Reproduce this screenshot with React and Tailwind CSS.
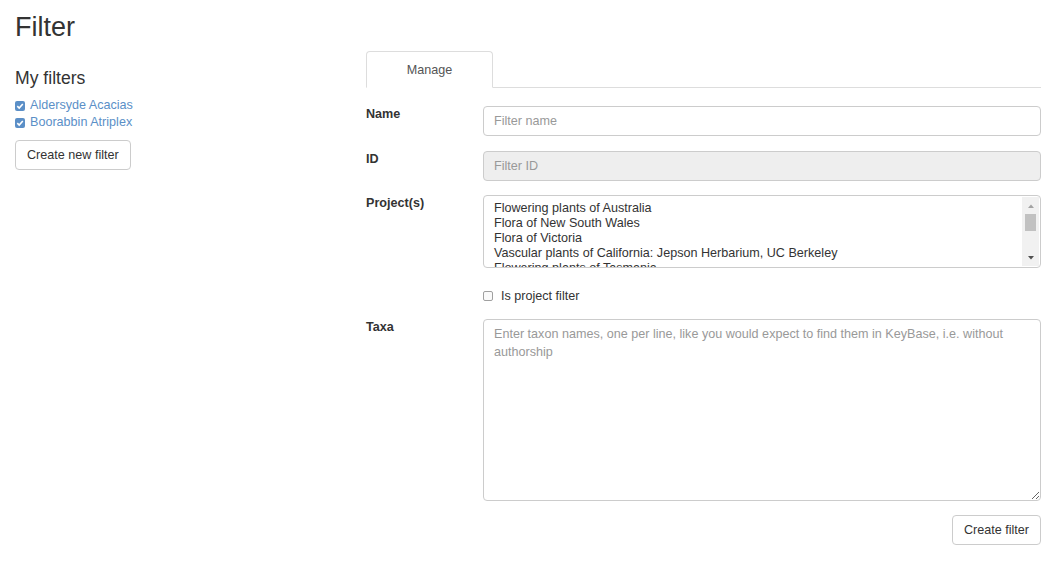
import React from "react";

const projects = [
  "Flowering plants of Australia",
  "Flora of New South Wales",
  "Flora of Victoria",
  "Vascular plants of California: Jepson Herbarium, UC Berkeley",
  "Flowering plants of Tasmania",
];

const myFilters = ["Aldersyde Acacias", "Boorabbin Atriplex"];

function CheckedBox() {
  return (
    <span className="inline-flex items-center justify-center w-[10px] h-[10px] rounded-[2px] bg-[#5b8fc7] mr-[5px]">
      <svg width="8" height="8" viewBox="0 0 8 8">
        <path d="M1.3 4.2 L3.2 6 L6.8 2" stroke="#fff" strokeWidth="1.6" fill="none" />
      </svg>
    </span>
  );
}

function FormRow({ label, children, className = "" }) {
  return (
    <div className={`flex items-start ${className}`}>
      <label className="w-[117px] shrink-0 font-bold leading-[18px] -mt-[1px]">{label}</label>
      <div className="flex-1">{children}</div>
    </div>
  );
}

export default function App() {
  return (
    <div className="font-['Liberation_Sans',Arial,sans-serif] text-[12.6px] leading-[18px] text-[#333] bg-white min-h-[566px] pl-[15px] pr-[19px]">
      <h2 className="text-[27px] leading-[30px] pt-[12px]">Filter</h2>

      <div className="flex">
        {/* left column */}
        <div className="w-[351px] shrink-0">
          <h4 className="text-[17.6px] leading-[20px] mt-[26px]">My filters</h4>
          <ul className="mt-[9px]">
            {myFilters.map((f) => (
              <li key={f} className="flex items-center leading-[17px]">
                <CheckedBox />
                <a href="#" className="text-[#5b8fc7]">{f}</a>
              </li>
            ))}
          </ul>
          <button className="mt-[9px] h-[30px] px-[11px] border border-[#ccc] rounded-[4px] bg-white text-[#333]">
            Create new filter
          </button>
        </div>

        {/* right column */}
        <div className="flex-1 mt-[9px]">
          <div className="flex border-b border-[#ddd] h-[37px]">
            <div className="w-[127px] h-[37px] border border-[#ddd] border-b-white rounded-t-[4px] bg-white flex items-center justify-center text-[#555]">
              Manage
            </div>
          </div>

          <FormRow label="Name" className="mt-[18px]">
            <input
              placeholder="Filter name"
              className="w-full h-[30px] border border-[#ccc] rounded-[4px] px-[10px] placeholder:text-[#999] outline-none"
            />
          </FormRow>

          <FormRow label="ID" className="mt-[15px]">
            <input
              placeholder="Filter ID"
              disabled
              className="w-full h-[30px] border border-[#ccc] rounded-[4px] px-[10px] bg-[#eee] placeholder:text-[#999]"
            />
          </FormRow>

          <FormRow label="Project(s)" className="mt-[14px]">
            <div className="flex h-[73px] border border-[#ccc] rounded-[4px] overflow-hidden">
              <div className="flex-1 pl-[10px] pt-[5px] overflow-hidden leading-[15px]">
                {projects.map((p) => (
                  <div key={p}>{p}</div>
                ))}
              </div>
              <div className="w-[17px] bg-[#f1f1f1] flex flex-col items-center my-px mr-px">
                <svg width="8" height="16" viewBox="0 0 8 16" className="mt-[1px]">
                  <path d="M1 10 L4 6.5 L7 10 Z" fill="#a3a3a3" />
                </svg>
                <div className="w-[11px] h-[17px] bg-[#c1c1c1]" />
                <div className="flex-1" />
                <svg width="8" height="16" viewBox="0 0 8 16">
                  <path d="M1 6 L4 9.5 L7 6 Z" fill="#505050" />
                </svg>
              </div>
            </div>
          </FormRow>

          <div className="flex mt-[19px]">
            <div className="w-[117px] shrink-0" />
            <label className="flex items-center">
              <span className="w-[10px] h-[10px] border border-[#a0a0a0] rounded-[2px] bg-[#fafafa] mr-[8px]" />
              Is project filter
            </label>
          </div>

          <FormRow label="Taxa" className="mt-[14px]">
            <textarea
              placeholder="Enter taxon names, one per line, like you would expect to find them in KeyBase, i.e. without authorship"
              className="block w-full h-[182px] border border-[#ccc] rounded-[4px] px-[10px] py-[5px] leading-[18px] placeholder:text-[#999] outline-none"
            />
          </FormRow>

          <div className="flex justify-end mt-[14px]">
            <button className="h-[30px] px-[11px] border border-[#ccc] rounded-[4px] bg-white text-[#333]">
              Create filter
            </button>
          </div>
        </div>
      </div>
    </div>
  );
}
